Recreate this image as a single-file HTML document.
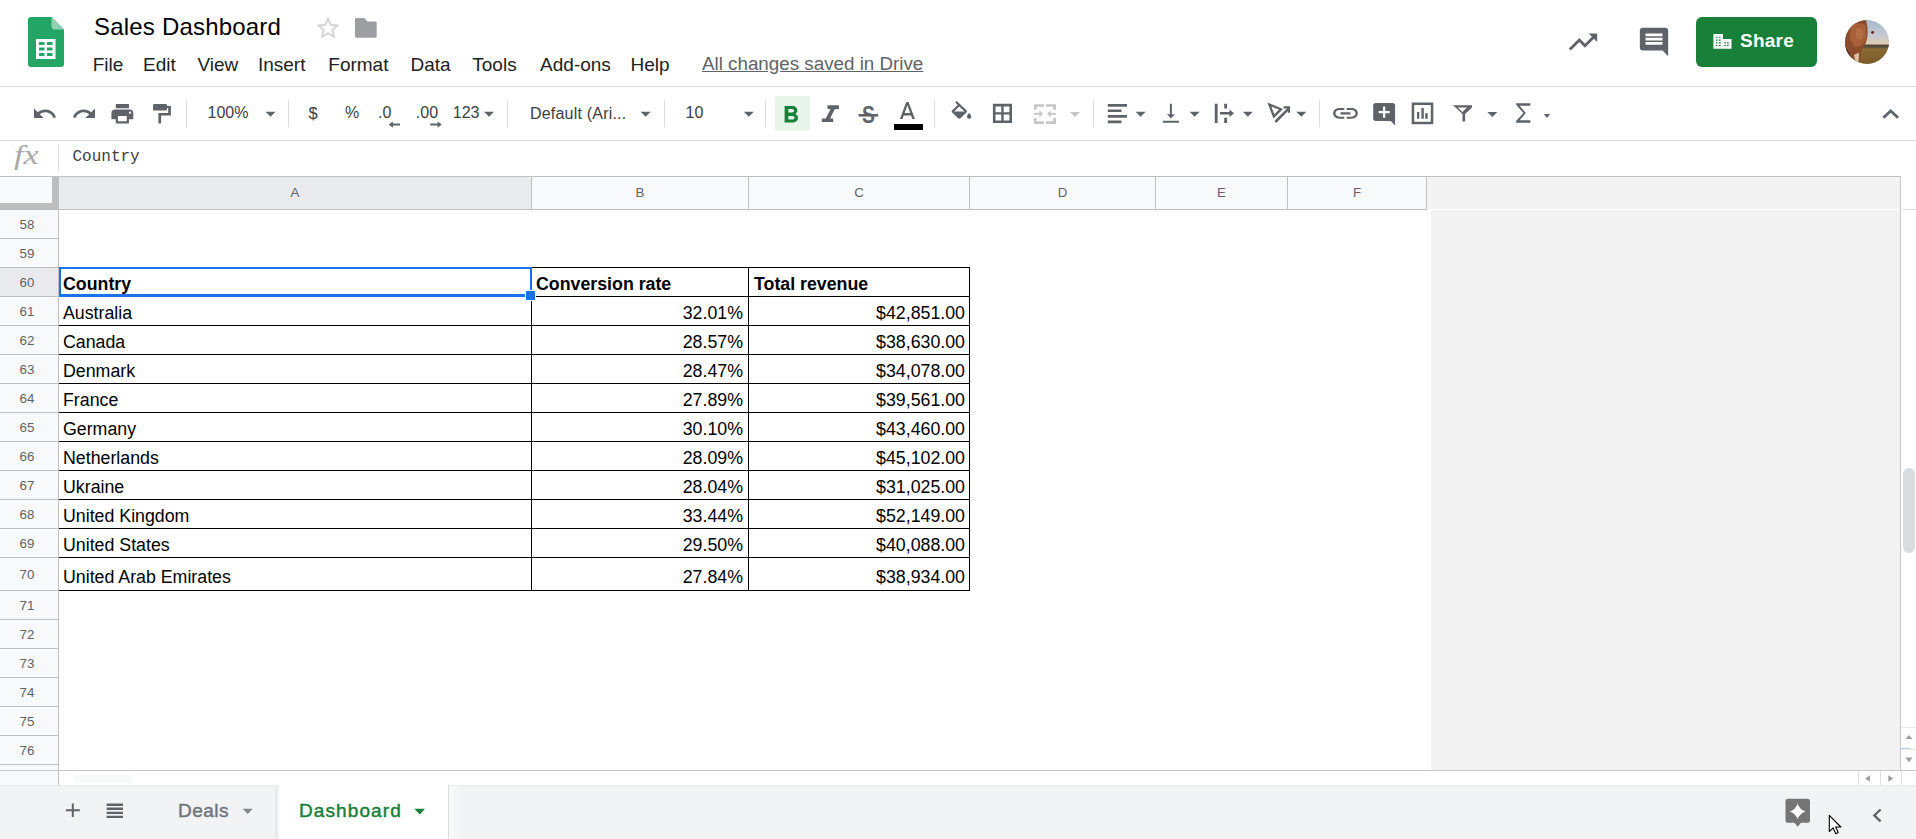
<!DOCTYPE html>
<html><head><meta charset="utf-8">
<style>
*{box-sizing:border-box;margin:0;padding:0}
html,body{width:1916px;height:839px;overflow:hidden;background:#fff;font-family:"Liberation Sans",sans-serif;color:#202124}
.a{position:absolute}
.t{position:absolute;white-space:nowrap;line-height:1}
svg{position:absolute;display:block}
.hl{position:absolute;height:1px;background:#dadce0}
.vl{position:absolute;width:1px;background:#dadce0}
.menu{font-size:19px;color:#202124}
.ic{fill:#5f6368}
.arr{position:absolute;width:0;height:0;border-left:5px solid transparent;border-right:5px solid transparent;border-top:5px solid #5f6368}
.rn{position:absolute;left:0;width:58px;text-align:center;font-size:13.3px;color:#5f6368;line-height:1}
.ch{position:absolute;top:186px;font-size:13.3px;color:#5f6368;line-height:1;text-align:center}
.cell{position:absolute;font-size:17.78px;color:#000;line-height:1;white-space:nowrap}
.bk{position:absolute;background:#000}
</style></head><body>

<!-- ============ HEADER ============ -->
<div id="header">
  <!-- sheets logo -->
  <svg style="left:28px;top:17px" width="36" height="50" viewBox="0 0 36 50">
    <path d="M3 0H23.5L36 12.5V47Q36 50 33 50H3Q0 50 0 47V3Q0 0 3 0Z" fill="#23a566"/>
    <path d="M23.5 0L36 12.5H26.5Q23.5 12.5 23.5 9.5Z" fill="#8ed1b1"/>
    <rect x="8" y="22" width="19.5" height="20" fill="#fff"/>
    <rect x="11" y="25" width="5.5" height="3" fill="#23a566"/>
    <rect x="19" y="25" width="5.5" height="3" fill="#23a566"/>
    <rect x="11" y="30.5" width="5.5" height="3" fill="#23a566"/>
    <rect x="19" y="30.5" width="5.5" height="3" fill="#23a566"/>
    <rect x="11" y="36" width="5.5" height="3" fill="#23a566"/>
    <rect x="19" y="36" width="5.5" height="3" fill="#23a566"/>
  </svg>
  <div class="t" style="left:94px;top:15px;font-size:24px;color:#000;letter-spacing:0.2px">Sales Dashboard</div>
  <!-- star -->
  <svg style="left:315px;top:15px" width="26" height="26" viewBox="1 1 22 22"><path fill="#d4d4d4" d="M22 9.24l-7.19-.62L12 2 9.19 8.63 2 9.24l5.46 4.73L5.82 21 12 17.27 18.18 21l-1.63-7.03L22 9.24zM12 15.4l-3.76 2.27 1-4.28-3.32-2.88 4.38-.38L12 6.1l1.71 4.04 4.38.38-3.32 2.88 1 4.28L12 15.4z"/></svg>
  <!-- folder -->
  <svg style="left:354px;top:17px" width="24" height="22" viewBox="354 17 24 22"><path fill="#9d9ea2" d="M355 19q0-1.1 1.1-1.1h8.5l2.6 3.6h8.4q1.1 0 1.1 1.1v14q0 1.1-1.1 1.1h-19.5q-1.1 0-1.1-1.1z"/></svg>

  <div class="t menu" style="left:92.7px;top:54.7px">File</div>
  <div class="t menu" style="left:143.1px;top:54.7px">Edit</div>
  <div class="t menu" style="left:197.5px;top:54.7px">View</div>
  <div class="t menu" style="left:257.9px;top:54.7px">Insert</div>
  <div class="t menu" style="left:328.3px;top:54.7px">Format</div>
  <div class="t menu" style="left:410.5px;top:54.7px">Data</div>
  <div class="t menu" style="left:472.3px;top:54.7px">Tools</div>
  <div class="t menu" style="left:540.1px;top:54.7px">Add-ons</div>
  <div class="t menu" style="left:630.5px;top:54.7px">Help</div>
  <div class="t menu" style="left:702px;top:54.7px;font-size:18.8px;color:#5f6368;text-decoration:underline">All changes saved in Drive</div>

  <!-- trending -->
  <svg style="left:1566px;top:25px" width="34" height="34" viewBox="0 0 24 24"><path class="ic" d="M16 6l2.29 2.29-4.88 4.88-4-4L2 16.59 3.41 18l6-6 4 4 6.3-6.29L22 12V6z"/></svg>
  <!-- comments -->
  <svg style="left:1637px;top:25px" width="34" height="34" viewBox="0 0 24 24"><path class="ic" d="M21.99 4c0-1.1-.89-2-1.99-2H4c-1.1 0-2 .9-2 2v12c0 1.1.9 2 2 2h14l4 4-.01-18zM18 14H6v-2h12v2zm0-3H6V9h12v2zm0-3H6V6h12v2z"/></svg>
  <!-- share -->
  <div class="a" style="left:1696px;top:17px;width:121px;height:50px;background:#188038;border-radius:6px"></div>
  <svg style="left:1713px;top:34px" width="19" height="15" viewBox="1713 34 19 15"><path fill="#fff" fill-rule="evenodd" d="M1713.4 34.1h9.5v4.9h8.6v9.8h-18.1z M1715.8 36.8h1.7v1h-1.7z M1718.8 36.8h1.9v1h-1.9z M1715.8 39.5h1.7v1.2h-1.7z M1718.8 39.5h1.9v1.2h-1.9z M1715.8 42.2h1.7v1.2h-1.7z M1718.8 42.2h1.9v1.2h-1.9z M1715.8 44.9h1.7v1.2h-1.7z M1718.8 44.9h1.9v1.2h-1.9z M1724.4 42.2h1.7v1.2h-1.7z M1726.9 42.2h1.9v1.2h-1.9z M1724.4 44.9h1.7v1.2h-1.7z M1726.9 44.9h1.9v1.2h-1.9z"/></svg>
  <div class="t" style="left:1740px;top:30.8px;font-size:19px;font-weight:700;color:#fff;letter-spacing:0.25px">Share</div>
  <!-- avatar -->
  <svg style="left:1845px;top:20px" width="44" height="44" viewBox="0 0 44 44">
    <defs>
      <clipPath id="avc"><circle cx="22" cy="22" r="22"/></clipPath>
      <linearGradient id="sky" x1="0" y1="0" x2="0" y2="1"><stop offset="0" stop-color="#a9b9cf"/><stop offset="0.6" stop-color="#c4c8d0"/><stop offset="1" stop-color="#e8cda8"/></linearGradient>
      <linearGradient id="fld" x1="0" y1="0" x2="0" y2="1"><stop offset="0" stop-color="#6b5a3e"/><stop offset="0.25" stop-color="#8a6a32"/><stop offset="1" stop-color="#7a5a2a"/></linearGradient>
    </defs>
    <g clip-path="url(#avc)">
      <rect x="0" y="0" width="44" height="26" fill="url(#sky)"/>
      <rect x="0" y="25" width="44" height="19" fill="url(#fld)"/>
      <rect x="0" y="24.5" width="44" height="3" fill="#55493a"/>
      <path d="M0 0H21Q23.5 8 22.5 16Q21 25 17 30L14 44H0Z" fill="#8a4c2c"/>
      <path d="M7 5Q14 1.5 20 5Q22.5 13 20 21Q16.5 27 10 27Q4 21 5 13Z" fill="#a86038"/>
      <path d="M11 9Q15 7 18 10Q19 15 17 19Q13 21 11 17Z" fill="#b87048" opacity="0.8"/>
      <path d="M0 26Q5 34 10 44H0Z" fill="#3a2418"/>
      <path d="M9 35L14 32.5L13.5 44H11Z" fill="#dcc0a2"/>
      <circle cx="27.5" cy="12.5" r="1.4" fill="#5a2a1a"/>
    </g>
  </svg>
</div>
<div class="hl" style="left:0;top:86px;width:1916px"></div>

<!-- ============ TOOLBAR ============ -->
<div id="toolbar">
<svg style="left:0;top:87px" width="1916" height="53" viewBox="0 87 1916 53">
<rect x="775" y="96" width="35" height="34.5" rx="2" fill="#e6f4ea"/>
<path d="M12.5 8c-2.65 0-5.05.99-6.9 2.6L2 7v9h9l-3.62-3.62c1.39-1.16 3.16-1.88 5.12-1.88 3.54 0 6.55 2.31 7.6 5.5l2.37-.78C21.08 11.03 17.15 8 12.5 8z" fill="#5f6368" transform="matrix(1.0747 0 0 1.0556 31.851 101.111)"/><!--undo-->
<path d="M18.4 10.6C16.55 8.99 14.15 8 11.5 8c-4.65 0-8.58 3.03-9.96 7.22L3.9 16c1.05-3.19 4.05-5.5 7.6-5.5 1.95 0 3.73.72 5.12 1.88L13 16h9V7l-3.6 3.6z" fill="#5f6368" transform="matrix(1.0753 0 0 1.0556 71.344 101.111)"/><!--redo-->
<path d="M19 8H5c-1.66 0-3 1.34-3 3v6h4v4h12v-4h4v-6c0-1.66-1.34-3-3-3zm-3 11H8v-5h8v5zm3-7c-.55 0-1-.45-1-1s.45-1 1-1 1 .45 1 1-.45 1-1 1zm-1-9H6v4h12V3z" fill="#5f6368" transform="matrix(1.0950 0 0 1.0833 109.210 100.750)"/><!--print-->
<path d="M15.6 10.79c.97-.67 1.65-1.77 1.65-2.79 0-2.26-1.75-4-4-4H7v14h7.04c2.09 0 3.71-1.7 3.71-3.79 0-1.52-.86-2.82-2.15-3.42zM10 6.5h3c.83 0 1.5.67 1.5 1.5s-.67 1.5-1.5 1.5h-3v-3zm3.5 9H10v-3h3.5c.83 0 1.5.67 1.5 1.5s-.67 1.5-1.5 1.5z" fill="#188038" transform="matrix(1.2465 0 0 1.1643 775.874 101.443)"/><!--bold-->
<path d="M10 4v3h2.21l-3.42 8H6v3h8v-3h-2.21l3.42-8H18V4z" fill="#5f6368" transform="matrix(1.4250 0 0 1.1929 813.250 100.529)"/><!--italic-->
<path d="M11 3L5.5 17h2.25l1.12-3h6.25l1.12 3h2.25L13 3h-2zm-1.38 9L12 5.67 14.38 12H9.62z" fill="#5f6368" transform="matrix(1.1547 0 0 1.2286 893.549 98.214)"/><!--textA-->
<path d="M16.56 8.94L7.62 0 6.21 1.41l2.38 2.38-5.15 5.15c-.59.59-.59 1.540 0 2.12l5.5 5.5c.29.29.68.44 1.06.44s.77-.15 1.06-.44l5.5-5.5c.59-.58.59-1.53 0-2.12zM5.21 10L10 5.21 14.79 10H5.21zM19 11.5s-2 2.17-2 3.5c0 1.1.9 2 2 2s2-.9 2-2c0-1.33-2-3.5-2-3.5z" fill="#5f6368" fill-rule="evenodd" transform="matrix(1.0887 0 0 1.0353 948.437 101.100)"/><!--fill-->
<path d="M16 13h-3V3h-2v10H8l4 4 4-4zM4 19v2h16v-2H4z" fill="#5f6368" transform="matrix(1.0000 0 0 1.0611 1158.900 100.517)"/><!--valign-->
<path d="M3.9 12c0-1.71 1.39-3.1 3.1-3.1h4V7H7c-2.76 0-5 2.24-5 5s2.24 5 5 5h4v-1.9H7c-1.71 0-3.1-1.39-3.1-3.1zM8 13h8v-2H8v2zm9-6h-4v1.9h4c1.71 0 3.1 1.39 3.1 3.1s-1.39 3.1-3.1 3.1h-4V17h4c2.76 0 5-2.24 5-5s-2.24-5-5-5z" fill="#5f6368" transform="matrix(1.2400 0 0 1.0700 1330.620 100.510)"/><!--link-->
<path d="M22 4c0-1.1-.9-2-2-2H4c-1.1 0-1.99.9-1.99 2L2 16c0 1.1.9 2 2 2h14l4 4-.01-18zM17 11h-4v4h-2v-4H7V9h4V5h2v4h4v2z" fill="#5f6368" transform="matrix(1.0950 0 0 1.1300 1371.010 100.740)"/><!--addcomment-->
<path d="M12 8l-6 6 1.41 1.41L12 10.83l4.59 4.58L18 14z" fill="#5f6368" transform="matrix(1.3833 0 0 1.3090 1874.100 98.528)"/><!--chevup-->
<path d="M265.5 111.7h10l-5.0 5z" fill="#5f6368"/>
<path d="M484 111.7h10l-5.0 5z" fill="#5f6368"/>
<path d="M640.6 111.7h10l-5.0 5z" fill="#5f6368"/>
<path d="M743.8 111.7h10l-5.0 5z" fill="#5f6368"/>
<path d="M1135.6 111.8h10l-5.0 5z" fill="#5f6368"/>
<path d="M1189.6 111.8h10l-5.0 5z" fill="#5f6368"/>
<path d="M1242.9 111.8h10l-5.0 5z" fill="#5f6368"/>
<path d="M1296.3 111.8h10l-5.0 5z" fill="#5f6368"/>
<path d="M1487.3 111.9h10l-5.0 5z" fill="#5f6368"/>
<path d="M1070 112h10l-5.0 5z" fill="#c6c6c6"/>
<path d="M1543.8 114h6.3l-3.15 3.9z" fill="#5f6368"/>
<rect x="186.0" y="100" width="1" height="27" fill="#dadce0"/>
<rect x="288.0" y="100" width="1" height="27" fill="#dadce0"/>
<rect x="507.0" y="100" width="1" height="27" fill="#dadce0"/>
<rect x="664.0" y="100" width="1" height="27" fill="#dadce0"/>
<rect x="765.0" y="100" width="1" height="27" fill="#dadce0"/>
<rect x="934.0" y="100" width="1" height="27" fill="#dadce0"/>
<rect x="1093.0" y="100" width="1" height="27" fill="#dadce0"/>
<rect x="1319.0" y="100" width="1" height="27" fill="#dadce0"/>
<text x="868.3" y="122.6" font-family="Liberation Sans" font-weight="700" font-size="23.5" text-anchor="middle" fill="#5f6368" transform="translate(868.3 0) scale(0.82 1) translate(-868.3 0)">S</text>
<rect x="858.5" y="114" width="19.6" height="2.6" fill="#5f6368"/>
<rect x="894" y="124" width="29" height="6" fill="#000"/>
<path fill="#c6c6c6" d="M1034 104.2h9.9v2.6h-7.3v2.9h-2.6zM1046.1 104.2h9.9v5.5h-2.8v-2.9h-7.1zM1034 118h2.6v3.3h7.3v2.6h-9.9zM1053.2 118h2.8v5.9h-9.9v-2.6h7.1zM1034 112.9h5.4v-2.6l3.5 3.55-3.5 3.55v-2.6h-5.4zM1056 112.9h-5.4v-2.6l-3.5 3.55 3.5 3.55v-2.6h5.4z"/>
<rect x="153" y="104.1" width="14" height="6.5" rx="1.4" fill="#5f6368"/>
<path fill="#5f6368" d="M167 105.9h3.9v9.5h-9.8v8.1h-2.7v-10.5h9.8v-4.9h-1.2z"/>
<path fill="#5f6368" fill-rule="evenodd" d="M992.9 103.8h19.1v19.2h-19.1zM995.5 106.4v5.8h5.75v-5.8zM1003.65 106.4v5.8h5.75v-5.8zM995.5 114.6v5.8h5.75v-5.8zM1003.65 114.6v5.8h5.75v-5.8z"/>
<path fill="#5f6368" d="M1107.8 104h19.2v2.8h-19.2zM1107.8 109.4h13.7v2.7h-13.7zM1107.8 115h19.2v2.8h-19.2zM1107.8 120.5h13.7v2.8h-13.7z"/>
<path fill="#5f6368" d="M1214.8 103.7h2.8v19.3h-2.8zM1224.2 103.7h2.9v4.9h-2.9zM1224.2 117.8h2.9v5.2h-2.9zM1220 112.1h9.5v-2.6l4.5 3.7-4.5 3.8v-2.6h-9.5z"/>
<path d="M1269.4 104.6L1281 109.3L1273.9 116.4Z" fill="none" stroke="#5f6368" stroke-width="2.3" stroke-linejoin="miter"/>
<path d="M1275.3 122L1288.6 108.7" stroke="#5f6368" stroke-width="2.6"/>
<path d="M1283.6 106.3h6.5v6.5h-2.3v-4.2h-4.2z" fill="#5f6368"/>
<path fill="#5f6368" fill-rule="evenodd" d="M1411.7 102.4h21.6v21.9h-21.6zM1414.2 104.9v16.9h16.6v-16.9z"/>
<path fill="#5f6368" d="M1417 112.1h2.3v6.6h-2.3zM1421.4 108h2.4v10.7h-2.4zM1425.2 113.3h2.5v5.4h-2.5z"/>
<path fill="#5f6368" d="M1452.8 105.2h19.2v2.3l-6.9 6.6v7.4h-2.6v-7.4l-6.9-6.6zM1457.8 107.5l4.6 4.4 4.6-4.4z" fill-rule="evenodd"/>
<path fill="#5f6368" d="M1516.1 103.3h14.2v2.4h-10.6l6.1 7.2-6.1 7.4h10.6v2.4h-14.2v-1.6l7.3-8.2-7.3-8.1z"/>
<text x="207.5" y="118.3" font-family="Liberation Sans" font-size="16" fill="#3c4043">100%</text>
<text x="308.6" y="118.8" font-family="Liberation Sans" font-size="16.5" fill="#3c4043">$</text>
<text x="345" y="118.3" font-family="Liberation Sans" font-size="16" fill="#3c4043">%</text>
<text x="378" y="118.3" font-family="Liberation Sans" font-size="16" fill="#3c4043">.0</text>
<text x="415.8" y="118.3" font-family="Liberation Sans" font-size="16" fill="#3c4043">.00</text>
<text x="452.8" y="118.3" font-family="Liberation Sans" font-size="16" fill="#3c4043">123</text>
<text x="530" y="118.5" font-family="Liberation Sans" font-size="16" fill="#3c4043" letter-spacing="0.2">Default (Ari...</text>
<text x="685.5" y="118.3" font-family="Liberation Sans" font-size="16" fill="#3c4043">10</text>
<path fill="#5f6368" d="M388.7 124.6l4.2-3.1v2.1h7.1v2h-7.1v2.1z"/>
<path fill="#5f6368" d="M441.8 124.6l-4.2-3.1v2.1h-7.4v2h7.4v2.1z"/>
</svg>
</div>
<div class="hl" style="left:0;top:140px;width:1916px"></div>

<!-- ============ FORMULA BAR ============ -->
<div id="formula"></div>

<!-- ============ GRID ============ -->
<div id="grid">
<div class="t" style="left:13.5px;top:142px;font-family:'Liberation Serif',serif;font-style:italic;font-size:27px;color:#a9a9a9;transform:scaleX(1.27);transform-origin:0 0">fx</div>
<div class="vl" style="left:58px;top:145px;height:26px"></div>
<div class="t" style="left:72.5px;top:149px;font-family:'Liberation Mono',monospace;font-size:16px;color:#3c4043">Country</div>
<div class="a" style="left:0;top:176px;width:1900px;height:1px;background:#c0c0c0"></div>
<div class="a" style="left:0;top:177px;width:52px;height:26px;background:#f8f9fa"></div>
<div class="a" style="left:52px;top:177px;width:7px;height:33px;background:#bdbdbd"></div>
<div class="a" style="left:0;top:203px;width:59px;height:7px;background:#bdbdbd"></div>
<div class="a" style="left:59px;top:177px;width:472px;height:32px;background:#e8eaed"></div>
<div class="ch" style="left:59px;width:472px">A</div>
<div class="a" style="left:531px;top:177px;width:1px;height:32px;background:#c0c0c0"></div>
<div class="a" style="left:532px;top:177px;width:216px;height:32px;background:#f8f9fa"></div>
<div class="ch" style="left:532px;width:216px">B</div>
<div class="a" style="left:748px;top:177px;width:1px;height:32px;background:#c0c0c0"></div>
<div class="a" style="left:749px;top:177px;width:220px;height:32px;background:#f8f9fa"></div>
<div class="ch" style="left:749px;width:220px">C</div>
<div class="a" style="left:969px;top:177px;width:1px;height:32px;background:#c0c0c0"></div>
<div class="a" style="left:970px;top:177px;width:185px;height:32px;background:#f8f9fa"></div>
<div class="ch" style="left:970px;width:185px">D</div>
<div class="a" style="left:1155px;top:177px;width:1px;height:32px;background:#c0c0c0"></div>
<div class="a" style="left:1156px;top:177px;width:131px;height:32px;background:#f8f9fa"></div>
<div class="ch" style="left:1156px;width:131px">E</div>
<div class="a" style="left:1287px;top:177px;width:1px;height:32px;background:#c0c0c0"></div>
<div class="a" style="left:1288px;top:177px;width:138px;height:32px;background:#f8f9fa"></div>
<div class="ch" style="left:1288px;width:138px">F</div>
<div class="a" style="left:1426px;top:177px;width:1px;height:32px;background:#c0c0c0"></div>
<div class="a" style="left:1427px;top:177px;width:473px;height:32px;background:#f3f3f3"></div>
<div class="a" style="left:59px;top:209px;width:1368px;height:1px;background:#c0c0c0"></div>
<div class="a" style="left:1431px;top:210px;width:469px;height:560px;background:#f3f3f3"></div>
<div class="a" style="left:1900px;top:176px;width:1px;height:594px;background:#c6c6c6"></div>
<div class="a" style="left:1902px;top:209px;width:14px;height:1px;background:#dadce0"></div>
<div class="a" style="left:1903px;top:468px;width:12px;height:85px;border-radius:6px;background:#dadce0"></div>
<svg style="left:1900px;top:725px" width="16" height="45" viewBox="0 0 16 45"><path d="M1 2.5H16M1 24.5H16" stroke="#e8eaed"/><path d="M5.4 14.1l3.55-4.2 3.55 4.2z" fill="#9e9e9e"/><path d="M5.4 32.6h7.1l-3.55 4.7z" fill="#9e9e9e"/><path d="M0 23.4H10" stroke="#a8c7fa"/></svg>
<div class="a" style="left:0;top:210px;width:58px;height:575px;background:#f8f9fa"></div>
<div class="a" style="left:58px;top:210px;width:1px;height:575px;background:#c0c0c0"></div>
<div class="a" style="left:0;top:238px;width:58px;height:1px;background:#c0c0c0"></div>
<div class="rn" style="top:217.5px;width:54px">58</div>
<div class="a" style="left:0;top:267px;width:58px;height:1px;background:#c0c0c0"></div>
<div class="rn" style="top:246.5px;width:54px">59</div>
<div class="a" style="left:0;top:268px;width:58px;height:28px;background:#e8eaed"></div>
<div class="a" style="left:0;top:296px;width:58px;height:1px;background:#c0c0c0"></div>
<div class="rn" style="top:275.5px;width:54px">60</div>
<div class="a" style="left:0;top:325px;width:58px;height:1px;background:#c0c0c0"></div>
<div class="rn" style="top:304.5px;width:54px">61</div>
<div class="a" style="left:0;top:354px;width:58px;height:1px;background:#c0c0c0"></div>
<div class="rn" style="top:333.5px;width:54px">62</div>
<div class="a" style="left:0;top:383px;width:58px;height:1px;background:#c0c0c0"></div>
<div class="rn" style="top:362.5px;width:54px">63</div>
<div class="a" style="left:0;top:412px;width:58px;height:1px;background:#c0c0c0"></div>
<div class="rn" style="top:391.5px;width:54px">64</div>
<div class="a" style="left:0;top:441px;width:58px;height:1px;background:#c0c0c0"></div>
<div class="rn" style="top:420.5px;width:54px">65</div>
<div class="a" style="left:0;top:470px;width:58px;height:1px;background:#c0c0c0"></div>
<div class="rn" style="top:449.5px;width:54px">66</div>
<div class="a" style="left:0;top:499px;width:58px;height:1px;background:#c0c0c0"></div>
<div class="rn" style="top:478.5px;width:54px">67</div>
<div class="a" style="left:0;top:528px;width:58px;height:1px;background:#c0c0c0"></div>
<div class="rn" style="top:507.5px;width:54px">68</div>
<div class="a" style="left:0;top:557px;width:58px;height:1px;background:#c0c0c0"></div>
<div class="rn" style="top:536.5px;width:54px">69</div>
<div class="a" style="left:0;top:590px;width:58px;height:1px;background:#c0c0c0"></div>
<div class="rn" style="top:567.5px;width:54px">70</div>
<div class="a" style="left:0;top:619px;width:58px;height:1px;background:#c0c0c0"></div>
<div class="rn" style="top:598.5px;width:54px">71</div>
<div class="a" style="left:0;top:648px;width:58px;height:1px;background:#c0c0c0"></div>
<div class="rn" style="top:627.5px;width:54px">72</div>
<div class="a" style="left:0;top:677px;width:58px;height:1px;background:#c0c0c0"></div>
<div class="rn" style="top:656.5px;width:54px">73</div>
<div class="a" style="left:0;top:706px;width:58px;height:1px;background:#c0c0c0"></div>
<div class="rn" style="top:685.5px;width:54px">74</div>
<div class="a" style="left:0;top:735px;width:58px;height:1px;background:#c0c0c0"></div>
<div class="rn" style="top:714.5px;width:54px">75</div>
<div class="a" style="left:0;top:764px;width:58px;height:1px;background:#c0c0c0"></div>
<div class="rn" style="top:743.5px;width:54px">76</div>
<div class="bk" style="left:59px;top:267px;width:911px;height:1px"></div>
<div class="bk" style="left:59px;top:296px;width:911px;height:1px"></div>
<div class="bk" style="left:59px;top:325px;width:911px;height:1px"></div>
<div class="bk" style="left:59px;top:354px;width:911px;height:1px"></div>
<div class="bk" style="left:59px;top:383px;width:911px;height:1px"></div>
<div class="bk" style="left:59px;top:412px;width:911px;height:1px"></div>
<div class="bk" style="left:59px;top:441px;width:911px;height:1px"></div>
<div class="bk" style="left:59px;top:470px;width:911px;height:1px"></div>
<div class="bk" style="left:59px;top:499px;width:911px;height:1px"></div>
<div class="bk" style="left:59px;top:528px;width:911px;height:1px"></div>
<div class="bk" style="left:59px;top:557px;width:911px;height:1px"></div>
<div class="bk" style="left:59px;top:590px;width:911px;height:1px"></div>
<div class="bk" style="left:531px;top:267px;width:1px;height:324px"></div>
<div class="bk" style="left:748px;top:267px;width:1px;height:324px"></div>
<div class="bk" style="left:969px;top:267px;width:1px;height:324px"></div>
<div class="cell" style="left:63px;top:275.65px;font-weight:700;">Country</div>
<div class="cell" style="left:536px;top:275.65px;font-weight:700;">Conversion rate</div>
<div class="cell" style="left:754px;top:275.65px;font-weight:700;">Total revenue</div>
<div class="cell" style="left:63px;top:304.65px;">Australia</div>
<div class="cell" style="right:1173px;top:304.65px;">32.01%</div>
<div class="cell" style="right:951px;top:304.65px;">$42,851.00</div>
<div class="cell" style="left:63px;top:333.65px;">Canada</div>
<div class="cell" style="right:1173px;top:333.65px;">28.57%</div>
<div class="cell" style="right:951px;top:333.65px;">$38,630.00</div>
<div class="cell" style="left:63px;top:362.65px;">Denmark</div>
<div class="cell" style="right:1173px;top:362.65px;">28.47%</div>
<div class="cell" style="right:951px;top:362.65px;">$34,078.00</div>
<div class="cell" style="left:63px;top:391.65px;">France</div>
<div class="cell" style="right:1173px;top:391.65px;">27.89%</div>
<div class="cell" style="right:951px;top:391.65px;">$39,561.00</div>
<div class="cell" style="left:63px;top:420.65px;">Germany</div>
<div class="cell" style="right:1173px;top:420.65px;">30.10%</div>
<div class="cell" style="right:951px;top:420.65px;">$43,460.00</div>
<div class="cell" style="left:63px;top:449.65px;">Netherlands</div>
<div class="cell" style="right:1173px;top:449.65px;">28.09%</div>
<div class="cell" style="right:951px;top:449.65px;">$45,102.00</div>
<div class="cell" style="left:63px;top:478.65px;">Ukraine</div>
<div class="cell" style="right:1173px;top:478.65px;">28.04%</div>
<div class="cell" style="right:951px;top:478.65px;">$31,025.00</div>
<div class="cell" style="left:63px;top:507.65px;">United Kingdom</div>
<div class="cell" style="right:1173px;top:507.65px;">33.44%</div>
<div class="cell" style="right:951px;top:507.65px;">$52,149.00</div>
<div class="cell" style="left:63px;top:536.65px;">United States</div>
<div class="cell" style="right:1173px;top:536.65px;">29.50%</div>
<div class="cell" style="right:951px;top:536.65px;">$40,088.00</div>
<div class="cell" style="left:63px;top:568.65px;">United Arab Emirates</div>
<div class="cell" style="right:1173px;top:568.65px;">27.84%</div>
<div class="cell" style="right:951px;top:568.65px;">$38,934.00</div>
<div class="a" style="left:59px;top:267px;width:473px;height:30px;border:2px solid #1a73e8;border-bottom-width:3px;border-top-width:2px"></div>
<div class="a" style="left:525px;top:290px;width:11px;height:11px;background:#1a73e8;border:1px solid #fff"></div>
<div class="a" style="left:0;top:770px;width:1916px;height:1px;background:#c6c6c6"></div>
<div class="a" style="left:0;top:771px;width:58px;height:14px;background:#f8f9fa"></div>
<div class="a" style="left:58px;top:771px;width:1px;height:14px;background:#c0c0c0"></div>
<div class="a" style="left:74px;top:775px;width:58px;height:8px;background:#f8f9fa"></div>
<svg style="left:1858px;top:771px" width="58" height="14" viewBox="0 0 58 14"><path d="M0.5 0V14M22.5 0V14M43.5 0V14" stroke="#e0e0e0"/><path d="M7 7.5l5-3.2v6.4z" fill="#9e9e9e"/><path d="M35.3 7.5l-5-3.2v6.4z" fill="#9e9e9e"/></svg>
</div>

<!-- ============ BOTTOM ============ -->
<div id="bottom">
<div class="a" style="left:0;top:785px;width:1916px;height:54px;background:#f1f3f4"></div>
<div class="a" style="left:0;top:785px;width:1916px;height:1px;background:#e8eaed"></div>
<div class="a" style="left:274px;top:785px;width:6px;height:54px;background:linear-gradient(90deg,#f1f3f4,#e6e8ea 40%,#fff)"></div>
<div class="a" style="left:280px;top:785px;width:168px;height:54px;background:#fff"></div>
<div class="a" style="left:448px;top:785px;width:1px;height:54px;background:#dadce0"></div>
<div class="a" style="left:449px;top:786px;width:16px;height:53px;background:linear-gradient(90deg,#fafafa,#f1f3f4)"></div>
<svg style="left:0;top:0" width="1916" height="839" viewBox="0 0 1916 839"><path d="M71.8 803.6h2v5.7h6v2h-6v5.7h-2v-5.7h-6v-2h6z" fill="#5f6368"/><path d="M106.6 803.6h16.4v2.3h-16.4zM106.6 807.6h16.4v2.3h-16.4zM106.6 811.7h16.4v2.3h-16.4zM106.6 815.8h16.4v2.3h-16.4z" fill="#5f6368"/><path d="M242.7 808.7h10l-5 5.4z" fill="#80868b"/><path d="M414.4 808.8h10.6l-5.3 5.6z" fill="#188038"/><path d="M1788 798.7h19.5q2.5 0 2.5 2.5v19.1q0 2.5-2.5 2.5h-6.5l-3.3 3.9-3.3-3.9h-6.4q-2.5 0-2.5-2.5v-19.1q0-2.5 2.5-2.5z" fill="#757575"/><path d="M1797.6 803.7Q1799.6 809.5 1805.3999999999999 811.5Q1799.6 813.5 1797.6 819.3Q1795.6 813.5 1789.8 811.5Q1795.6 809.5 1797.6 803.7z" fill="#fff"/><path d="M1829.3 815.3v16.2l3.9-3.6 2.6 5.8 2.5-1.1-2.6-5.6h5.1z" fill="#fff" stroke="#000" stroke-width="1.1" stroke-linejoin="round"/><path d="M1880.6 809.5L1874.3 815.4L1880.6 821.3" fill="none" stroke="#5f6368" stroke-width="2.3"/></svg>
<div class="t" style="left:178px;top:801px;font-size:19px;color:#70757a;letter-spacing:0.5px;-webkit-text-stroke:0.45px #70757a">Deals</div>
<div class="t" style="left:299px;top:801px;font-size:19px;color:#188038;letter-spacing:1.1px;-webkit-text-stroke:0.45px #188038">Dashboard</div>
</div>

</body></html>
